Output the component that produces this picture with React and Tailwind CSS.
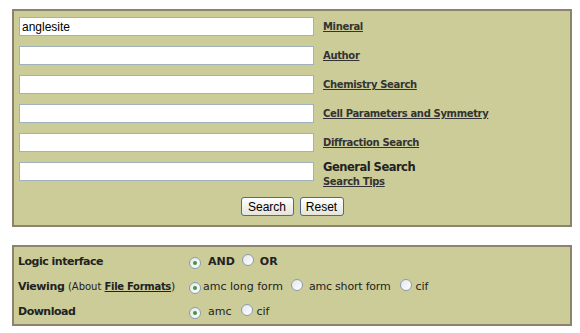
import { useState } from "react";

const fields = [
    { label: "Mineral", value: "anglesite" },
    { label: "Author", value: "" },
    { label: "Chemistry Search", value: "" },
    { label: "Cell Parameters and Symmetry", value: "" },
    { label: "Diffraction Search", value: "" },
];

function Radio({ checked }) {
    return (
        <span className="inline-flex items-center justify-center w-[12px] h-[12px] rounded-full border border-[#8a9cb0] bg-gradient-to-br from-[#e4e6ea] to-[#ffffff] shrink-0">
            {checked && <span className="w-[4px] h-[4px] rounded-full bg-[#3d9a3d]" />}
        </span>
    );
}

export default function App() {
    const [values, setValues] = useState(fields.map((f) => f.value).concat([""]));

    return (
        <div className="w-[580px] h-[333px] bg-white pt-[9px] pl-[12px] font-['DejaVu_Sans',sans-serif] text-[#222]">
            {/* search panel */}
            <div className="w-[560px] h-[218px] border-2 border-[#8c836e] bg-[#cccc99] pt-[6px] pl-[5px] flex flex-col gap-[10px]">
                {fields.map((f, i) => (
                    <div key={f.label} className="flex items-center h-[19px]">
                        <input
                            value={values[i]}
                            onChange={(e) => {
                                const v = [...values];
                                v[i] = e.target.value;
                                setValues(v);
                            }}
                            className="w-[295px] h-[19px] bg-white border border-[#9fb2bd] px-[2px] text-[12px] font-['Liberation_Sans',sans-serif] text-black outline-none"
                        />
                        <a href="#" className="ml-[9px] text-[10px] font-bold underline text-[#333] tracking-[-0.35px]">
                            {f.label}
                        </a>
                    </div>
                ))}
                <div className="flex items-start h-[19px]">
                    <input
                        value={values[5]}
                        onChange={(e) => {
                            const v = [...values];
                            v[5] = e.target.value;
                            setValues(v);
                        }}
                        className="w-[295px] h-[19px] bg-white border border-[#9fb2bd] px-[2px] text-[12px] font-['Liberation_Sans',sans-serif] text-black outline-none"
                    />
                    <div className="ml-[9px] flex flex-col leading-none">
                        <span className="text-[11.5px] font-bold text-[#222] tracking-[-0.5px]">General Search</span>
                        <a href="#" className="text-[10px] font-bold underline text-[#333] mt-[3px] tracking-[-0.35px]">
                            Search Tips
                        </a>
                    </div>
                </div>
                <div className="flex justify-center gap-[6px] mt-[6px] pr-[5px] font-['Liberation_Sans',sans-serif]">
                    <button className="h-[19px] w-[53px] rounded-[3px] border border-[#3c6fb0] bg-gradient-to-b from-white to-[#e6e4da] text-[12px] text-black leading-none">
                        Search
                    </button>
                    <button className="h-[19px] w-[44px] rounded-[3px] border border-[#4b6d8a] bg-gradient-to-b from-white to-[#e6e4da] text-[12px] text-black leading-none">
                        Reset
                    </button>
                </div>
            </div>

            {/* options panel */}
            <div className="mt-[18px] w-[560px] h-[81px] border-2 border-[#8c836e] bg-[#cccc99] pl-[4px] pt-[3px] text-[11px]">
                <div className="grid grid-cols-[171px_1fr] grid-rows-[25px_25px_25px] items-center">
                    <span className="font-bold tracking-[-0.5px]">Logic interface</span>
                    <div className="flex items-center font-bold">
                        <Radio checked />
                        <span className="ml-[7px]">AND</span>
                        <span className="ml-[7px]"><Radio /></span>
                        <span className="ml-[6px]">OR</span>
                    </div>

                    <span>
                        <span className="font-bold tracking-[-0.4px]">Viewing</span>{" "}
                        <span className="text-[10px]">(About </span>
                        <a href="#" className="text-[10px] font-bold underline tracking-[-0.3px]">File Formats</a>
                        <span>)</span>
                    </span>
                    <div className="flex items-center">
                        <Radio checked />
                        <span className="ml-[2px]">amc long form</span>
                        <span className="ml-[8px]"><Radio /></span>
                        <span className="ml-[6px] tracking-[-0.2px]">amc short form</span>
                        <span className="ml-[9px]"><Radio /></span>
                        <span className="ml-[4px]">cif</span>
                    </div>

                    <span className="font-bold tracking-[-0.5px]">Download</span>
                    <div className="flex items-center">
                        <Radio checked />
                        <span className="ml-[7px]">amc</span>
                        <span className="ml-[9px]"><Radio /></span>
                        <span className="ml-[4px]">cif</span>
                    </div>
                </div>
            </div>
        </div>
    );
}
